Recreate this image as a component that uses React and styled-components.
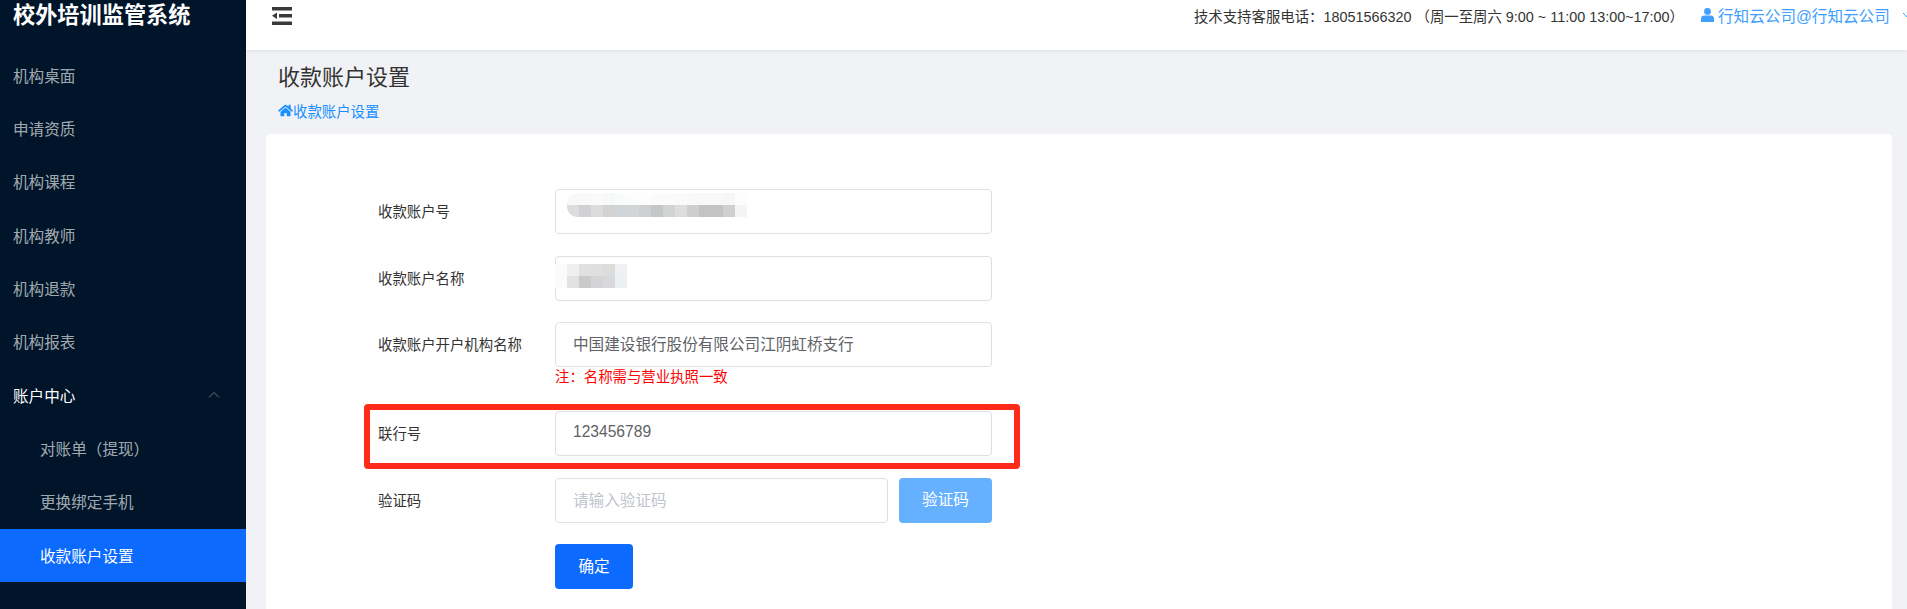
import React from 'react'
import styled, { createGlobalStyle } from 'styled-components'
import { FaHome } from 'react-icons/fa'

const GlobalStyle = createGlobalStyle`
  html, body {
    margin: 0;
    height: 100%;
    overflow: hidden;
  }
  body {
    font-family: "Liberation Sans", "Noto Sans CJK SC", sans-serif;
    font-size: 14px;
    color: #333;
    background: #f0f2f5;
  }
`

const Layout = styled.div`
  display: flex;
  width: 1907px;
  height: 609px;
  overflow: hidden;
`

const Sidebar = styled.aside`
  flex: 0 0 246px;
  background: #001529;
  color: rgba(255, 255, 255, 0.65);
`

const Logo = styled.div`
  height: 49px;
  padding-left: 13px;
  font-size: 22.2px;
  font-weight: 700;
  line-height: 31px;
  color: #fff;
`

const Menu = styled.ul`
  list-style: none;
  margin: 0;
  padding: 0;
`

const MenuItem = styled.li`
  display: flex;
  align-items: center;
  justify-content: space-between;
  box-sizing: border-box;
  height: 53.33px;
  padding: 0 26px 2px ${props => (props.$sub ? '40px' : '13px')};
  font-size: 15.6px;
  color: ${props => (props.$open || props.$active ? '#fff' : 'rgba(255, 255, 255, 0.65)')};
  background: ${props => (props.$active ? '#0d6aff' : 'transparent')};
`

const Main = styled.main`
  flex: 1;
  min-width: 0;
`

const Header = styled.header`
  display: flex;
  align-items: flex-start;
  justify-content: space-between;
  box-sizing: border-box;
  height: 50px;
  padding: 4px 0 0 26px;
  background: #fff;
  box-shadow: 0 1px 4px rgba(0, 21, 41, 0.08);
`

const Collapse = styled.svg`
  margin-top: 3px;
`

const HeaderRight = styled.div`
  display: flex;
  align-items: center;
  gap: 17px;
  white-space: nowrap;
`

const Support = styled.span`
  font-size: 14.4px;
  color: #333;
`

const User = styled.span`
  display: flex;
  align-items: center;
  gap: 4px;
  width: 206px;
  font-size: 15.6px;
  color: #409eff;

  svg {
    flex: none;
  }

  svg:last-child {
    margin-left: 8px;
  }
`

const PageHead = styled.div`
  padding: 12px 0 0 32px;
  height: 72px;
  box-sizing: border-box;
`

const PageTitle = styled.h1`
  margin: 0;
  font-size: 22px;
  font-weight: 400;
  line-height: 32px;
  color: #333;
`

const Crumb = styled.div`
  display: flex;
  align-items: center;
  margin-top: 6px;
  font-size: 14.4px;
  color: #1890ff;
`

const Card = styled.section`
  margin: 12px 15px 0 20px;
  padding: 55px 0 0 112px;
  height: 520px;
  background: #fff;
  border-radius: 4px;
`

const Row = styled.div`
  position: relative;
  display: grid;
  grid-template-columns: 177px 437px;
  margin-bottom: 21.68px;
`

const Label = styled.label`
  display: flex;
  align-items: center;
  padding-bottom: 2px;
  font-size: 14.4px;
  color: #333;
`

const Field = styled.div`
  display: flex;
  gap: 11px;
`

const Input = styled.div`
  flex: 1;
  display: flex;
  align-items: center;
  box-sizing: border-box;
  height: 45px;
  padding: 0 17px 3px;
  border: 1px solid #dcdfe6;
  border-radius: 4px;
  font-size: 15.6px;
  color: ${props => (props.$placeholder ? '#c0c4cc' : '#606266')};
`

const Note = styled.div`
  grid-column: 2;
  height: 22px;
  line-height: 21px;
  font-size: 14.4px;
  color: #ff0000;
`

const CodeButton = styled.button`
  flex: 0 0 93px;
  height: 45px;
  padding: 0 0 4px;
  border: none;
  border-radius: 4px;
  background: #66b1ff;
  color: #fff;
  font: inherit;
  font-size: 15.6px;
`

const SubmitButton = styled.button`
  grid-column: 2;
  width: 78px;
  height: 45px;
  padding: 0 0 4px;
  border: none;
  border-radius: 4px;
  background: #0d6aff;
  color: #fff;
  font: inherit;
  font-size: 15.6px;
`

const Mosaic = styled.div`
  position: absolute;
  left: ${props => props.$left}px;
  top: ${props => props.$top}px;
  display: grid;
  grid-template-columns: repeat(${props => props.$cols}, 12px);
  grid-auto-rows: 12px;
  border-radius: ${props => props.$round}px 0 0 ${props => props.$round}px;
  overflow: hidden;
`

const Cell = styled.span`
  background: ${props => props.$color};
`

const Highlight = styled.div`
  position: absolute;
  left: -14px;
  top: -7px;
  width: 656px;
  height: 65px;
  box-sizing: border-box;
  border: 6px solid #ff2a1a;
  border-radius: 4px;
  pointer-events: none;
`

const accountCells = [
  '#f8f8f8', '#f9f9f9', '#fafafa', '#f7f8f8', '#fafbfb', '#fbfcfc', '#fcfdfc', '#fbfbfb', '#fbfbfb', '#fafafa', '#f8f9f9', '#f9f8f8', '#f8f8f8', '#f5f6f6', '#fdfdfd',
  '#dddbdb', '#cfd1d4', '#dedcda', '#d1d2d2', '#d0d5d8', '#d4d5d6', '#cdd0d3', '#c5c6c6', '#d1d3d5', '#dfdddb', '#cdced0', '#c3c3c3', '#c3c3c3', '#cfd0cf', '#f3f4f6'
]

const nameCells = [
  '#fbfbfb', '#efefef', '#e0e0e0', '#dfdfdf', '#dcdcdb', '#eef0f2',
  '#fbfbfb', '#e1e2e4', '#cacaca', '#d4d4d6', '#d8d8dc', '#ecf0f0'
]

const menu = ['机构桌面', '申请资质', '机构课程', '机构教师', '机构退款', '机构报表']

const UserIcon = () => (
  <svg width="13" height="14" viewBox="0 0 13 14" fill="#409eff">
    <circle cx="6.5" cy="3.4" r="3.4" />
    <path d="M0 14v-3.6C0 8.6 1.5 7.4 3.4 7.4h6.2c1.9 0 3.4 1.2 3.4 3V14H0Z" />
  </svg>
)

const CollapseIcon = () => (
  <Collapse width="20" height="18" viewBox="0 0 20 18" fill="#3a3a3a">
    <rect x="0" y="0" width="20" height="3.5" />
    <rect x="7" y="7" width="13" height="3.5" />
    <rect x="0" y="14.5" width="20" height="3.5" />
    <path d="M0 8.75 5 5.5v6.5Z" />
  </Collapse>
)

const Chevron = ({ up, color }) => (
  <svg width="12" height="7" viewBox="0 0 12 7" fill="none" stroke={color} strokeWidth="1">
    <path d={up ? 'M1 6.5 6 1.5l5 5' : 'M1 1 6 6l5-5'} />
  </svg>
)

const App = () => (
  <Layout>
    <GlobalStyle />
    <Sidebar>
      <Logo>校外培训监管系统</Logo>
      <Menu>
        {menu.map(item => (
          <MenuItem key={item}>{item}</MenuItem>
        ))}
        <MenuItem $open>
          账户中心
          <Chevron up color="rgba(255,255,255,0.4)" />
        </MenuItem>
        <MenuItem $sub>对账单（提现）</MenuItem>
        <MenuItem $sub>更换绑定手机</MenuItem>
        <MenuItem $sub $active>收款账户设置</MenuItem>
      </Menu>
    </Sidebar>
    <Main>
      <Header>
        <CollapseIcon />
        <HeaderRight>
          <Support>技术支持客服电话：18051566320 （周一至周六 9:00 ~ 11:00 13:00~17:00）</Support>
          <User>
            <UserIcon />
            行知云公司@行知云公司
            <Chevron color="#409eff" />
          </User>
        </HeaderRight>
      </Header>
      <PageHead>
        <PageTitle>收款账户设置</PageTitle>
        <Crumb>
          <FaHome size={15} />
          收款账户设置
        </Crumb>
      </PageHead>
      <Card>
        <Row>
          <Label>收款账户号</Label>
          <Field>
            <Input />
          </Field>
          <Mosaic $left={189} $top={4} $cols={15} $round={10}>
            {accountCells.map((c, i) => (
              <Cell key={i} $color={c} />
            ))}
          </Mosaic>
        </Row>
        <Row>
          <Label>收款账户名称</Label>
          <Field>
            <Input />
          </Field>
          <Mosaic $left={177} $top={8} $cols={6} $round={0}>
            {nameCells.map((c, i) => (
              <Cell key={i} $color={c} />
            ))}
          </Mosaic>
        </Row>
        <Row>
          <Label>收款账户开户机构名称</Label>
          <Field>
            <Input>中国建设银行股份有限公司江阴虹桥支行</Input>
          </Field>
          <Note>注：名称需与营业执照一致</Note>
        </Row>
        <Row>
          <Label>联行号</Label>
          <Field>
            <Input>123456789</Input>
          </Field>
          <Highlight />
        </Row>
        <Row>
          <Label>验证码</Label>
          <Field>
            <Input $placeholder>请输入验证码</Input>
            <CodeButton>验证码</CodeButton>
          </Field>
        </Row>
        <Row>
          <SubmitButton>确定</SubmitButton>
        </Row>
      </Card>
    </Main>
  </Layout>
)

export default App
